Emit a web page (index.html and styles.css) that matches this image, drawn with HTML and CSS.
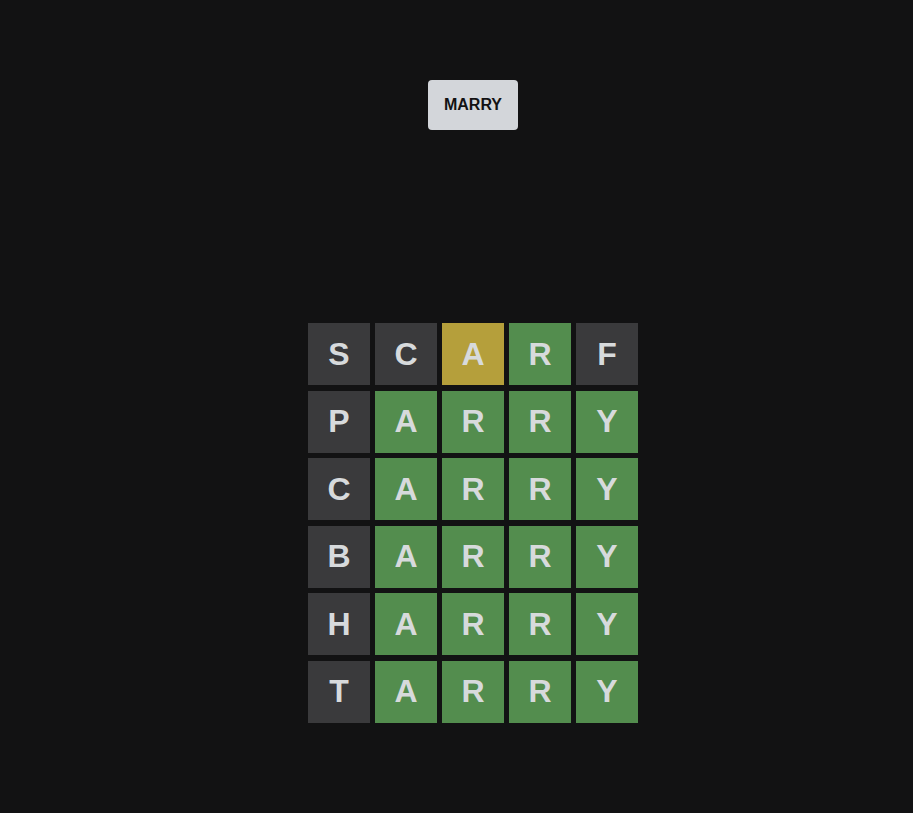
FILE: index.html
```html
<!DOCTYPE html>
<html lang="en">
<head>
    <meta charset="UTF-8">
    <meta name="viewport" content="width=device-width, initial-scale=1.0">
    <title>Wordle</title>
    <link rel="stylesheet" href="styles.css">
</head>
<body>
    <main class="game">
        <button class="answer-button">MARRY</button>

        <div class="board">
            <div class="tile absent">S</div>
            <div class="tile absent">C</div>
            <div class="tile present">A</div>
            <div class="tile correct">R</div>
            <div class="tile absent">F</div>

            <div class="tile absent">P</div>
            <div class="tile correct">A</div>
            <div class="tile correct">R</div>
            <div class="tile correct">R</div>
            <div class="tile correct">Y</div>

            <div class="tile absent">C</div>
            <div class="tile correct">A</div>
            <div class="tile correct">R</div>
            <div class="tile correct">R</div>
            <div class="tile correct">Y</div>

            <div class="tile absent">B</div>
            <div class="tile correct">A</div>
            <div class="tile correct">R</div>
            <div class="tile correct">R</div>
            <div class="tile correct">Y</div>

            <div class="tile absent">H</div>
            <div class="tile correct">A</div>
            <div class="tile correct">R</div>
            <div class="tile correct">R</div>
            <div class="tile correct">Y</div>

            <div class="tile absent">T</div>
            <div class="tile correct">A</div>
            <div class="tile correct">R</div>
            <div class="tile correct">R</div>
            <div class="tile correct">Y</div>
        </div>
    </main>
</body>
</html>
```

FILE: styles.css
```css
body {
    margin: 0;
    padding: 0;
    background: #121213;
    font-family: 'Liberation Sans', Arial, sans-serif;
    min-height: 813px;
}

.game {
    display: flex;
    flex-direction: column;
    align-items: center;
    padding: 80px 0 0 33px;
}

.answer-button {
    width: 90px;
    height: 50px;
    background: #d3d6da;
    color: #121213;
    border: none;
    border-radius: 4px;
    font-family: inherit;
    font-size: 16px;
    font-weight: bold;
    padding: 0;
    cursor: pointer;
}

.board {
    margin-top: 193px;
    width: 330px;
    height: 400px;
    display: grid;
    grid-template-columns: repeat(5, 62px);
    grid-template-rows: repeat(6, 62px);
    column-gap: 5px;
    align-content: space-between;
}

.tile {
    display: flex;
    align-items: center;
    justify-content: center;
    color: #d7dadc;
    font-size: 32px;
    font-weight: bold;
}

.absent {
    background: #3a3a3c;
}

.present {
    background: #b59f3b;
}

.correct {
    background: #538d4e;
}
```
